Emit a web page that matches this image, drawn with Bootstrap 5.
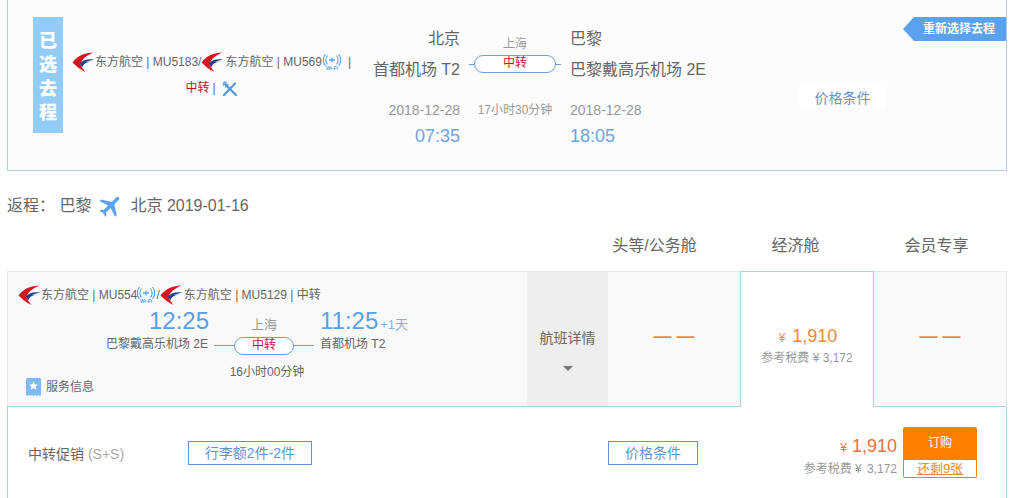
<!DOCTYPE html>
<html lang="zh">
<head>
  <meta charset="UTF-8">
  <title>选择航班</title>
  <link href="https://cdn.jsdelivr.net/npm/bootstrap@5.3.0/dist/css/bootstrap.min.css" rel="stylesheet">
  <style>
    body { font-family: "Liberation Sans", "Noto Sans CJK SC", sans-serif; color: #666; background: #fff; font-size: 12px; overflow: hidden; }
    .sheet { padding: 0 2px 0 7px; }
    .picked { height: 171px; background: #fcfcfc; border: 1px solid #a9cfe9; border-top: 0; position: relative; }
    .picked-tag { width: 30px; height: 116px; margin: 17px 0 0 25px; padding-top: 12px; background: #93cbfb; color: #fff; font-size: 18px; font-weight: 900; line-height: 24px; text-align: center; flex: none; }
    .picked-info { width: 297px; padding-top: 49px; line-height: 26px; flex: none; }
    .carrier-line { height: 26px; white-space: nowrap; }
    .carrier-logo { width: 22px; height: 22px; flex: none; }
    .wifi-ico { width: 18px; height: 18px; flex: none; }
    .gap-1px { margin-left: 1px; }
    .gap-2px { margin-left: 2px; }
    .gap-3px { margin-left: 3px; }
    .gap-6px { margin-left: 6px; }
    .gap-7px { margin-left: 7px; }
    .stop-red { color: #c8102e; }
    .picked-route { display: grid; grid-template-columns: 100px 110px 1fr; grid-template-rows: 30px 32px 11px 26px 25px; padding-top: 24px; width: 400px; flex: none; font-size: 16px; }
    .route-row1 { line-height: 30px; }
    .route-row2 { grid-row: 2; line-height: 32px; }
    .route-mid { grid-column: 2; grid-row: 1 / span 2; padding-top: 10px; font-size: 12px; color: #999; text-align: center; line-height: 18px; }
    .route-mid-city { height: 21px; padding-top: 1px; }
    .stop-link { display: flex; align-items: center; justify-content: center; }
    .stop-link::before, .stop-link::after { content: ""; height: 1px; background: #6d9fd8; }
    .stop-pill { border: 1px solid #6d9fd8; border-radius: 9px; height: 18px; line-height: 15px; font-size: 12px; background: #fff; text-align: center; }
    .picked-link::before, .picked-link::after { width: 5px; }
    .picked-link .stop-pill { width: 82px; }
    .date-txt { font-size: 14px; color: #999; line-height: 26px; }
    .span-txt { font-size: 12px; color: #999; line-height: 26px; text-align: center; }
    .time-sm { font-size: 18px; color: #6ea3e0; line-height: 26px; }
    .rebook { position: absolute; right: 0; top: 17px; width: 103px; height: 24px; line-height: 24px; padding-left: 20px; color: #fff; font-weight: 700; font-size: 12px; background: #5aa2f0; clip-path: polygon(0 50%, 11px 0, 100% 0, 100% 100%, 11px 100%); }
    .picked-cond { width: 87px; height: 22px; line-height: 22px; margin: 87px 0 0 39px; background: #fff; color: #5f93d3; font-size: 14px; text-align: center; flex: none; }
    .back-head { margin-top: 21px; font-size: 16px; line-height: 24px; }
    .plane-ico { width: 28px; height: 28px; margin: 0 5px 0 6px; fill: #5aa2f0; }
    .cabin-heads { padding-left: 577px; margin-top: 14px; font-size: 16px; line-height: 24px; }
    .cabin-heads > div { width: 141px; text-align: center; }
    .flight-row { margin-top: 13px; height: 136px; }
    .flight-cell { background: #f9f9f9; border-top: 1px solid #e8e8e8; border-bottom: 1px solid #a9d3ea; }
    .flight-main { width: 520px; border-left: 1px solid #e8e8e8; padding: 10px 0 0 10px; position: relative; }
    .flight-detail { width: 81px; background: #eee; border-top-color: #e8e8e8; font-size: 14px; padding-top: 54px; text-align: center; line-height: 24px; color: #666; }
    .detail-caret { width: 0; height: 0; border: 5px solid transparent; border-top: 5px solid #777; border-bottom: 0; margin: 16px auto 0; }
    .cabin-cell { display: flex; flex-direction: column; align-items: center; justify-content: center; }
    .cabin-none { width: 132px; color: #f98a2e; font-size: 18px; font-weight: 700; padding-bottom: 5px; }
    .cabin-on { width: 134px; background: #fff; border: 1px solid #a9d3ea; border-bottom: 0; padding-top: 12px; }
    .cabin-end { width: 133px; border-right: 1px solid #e8e8e8; }
    .price-big { font-size: 18px; color: #f0883a; line-height: 24px; padding-left: 2px; }
    .price-yen { font-size: 12px; }
    .cabin-on .price-yen { margin-right: 2px; }
    .cabin-on .price-tax { margin-top: -1px; }
    .price-tax { font-size: 12px; color: #999; line-height: 18px; }
    .tax-num { margin-left: 2px; }
    .back-route { display: grid; grid-template-columns: 190px 112px 1fr; grid-template-rows: 27px 22px 34px; margin-top: -2px; }
    .time-lg { font-size: 24px; line-height: 29px; color: #5b9fe6; }
    .time-dep { margin-right: -1px; }
    .time-plus { font-size: 13px; color: #7fb2e8; margin-left: 2px; }
    .back-mid { grid-column: 2; grid-row: 1 / span 2; font-size: 13px; color: #999; text-align: center; padding-top: 9px; }
    .back-link::before, .back-link::after { width: 20px; }
    .back-link { margin-top: 2px; }
    .back-link .stop-pill { width: 60px; }
    .back-city { grid-row: 2; line-height: 22px; }
    .back-span { grid-row: 3; grid-column: 2; line-height: 34px; padding-left: 6px; text-align: center; }
    .service-line { position: absolute; left: 18px; top: 105px; line-height: 20px; }
    .ticket-ico { width: 15px; height: 18px; margin-right: 5px; }
    .fare-panel { height: 110px; background: #fff; border-left: 1px solid #a9d3ea; border-right: 1px solid #a9d3ea; padding: 20px 29px 0 20px; }
    .fare-name { width: 160px; font-size: 14px; line-height: 54px; }
    .fare-code { color: #aaa; }
    .fare-tag { background: #fff; border: 1px solid #5f93d3; color: #5f93d3; border-radius: 0; font-size: 14px; line-height: 22px; height: 24px; padding: 0; margin-top: 14px; text-align: center; }
    .fare-bag { width: 124px; }
    .fare-cond { width: 90px; margin-left: 296px; }
    .fare-price { margin-right: 6px; padding-top: 7px; }
    .fare-amount { font-size: 18px; color: #ee6f3a; line-height: 24px; }
    .buy-box { width: 74px; }
    .buy-btn { display: block; width: 100%; height: 33px; line-height: 33px; padding: 0; border: 0; border-radius: 2px 2px 0 0; background: #ff8000; color: #fff; font-size: 12px; }
    .buy-left { height: 18px; line-height: 17px; border: 1px solid #ff8000; border-top: 0; border-radius: 0 0 2px 2px; text-align: center; color: #f0883a; font-size: 13px; text-decoration: underline; background: #fff; }
  </style>
</head>
<body>
  <svg width="0" height="0" class="d-none" aria-hidden="true">
    <symbol id="mu-logo" viewBox="0 0 22 22">
      <path d="M21.500 1.500C13 1.500 5 5 .5 11.500 4 15 8 18.500 13.500 21 11 18 9 15 8.500 13 10 8 15 4 21.500 1.500Z" fill="#d8141f"/>
      <path d="M22 8.500C15 7.500 10 9.500 7.800 12.800L10.500 16.500C11 13 15 10.800 20 10.600L14 10.800C17 9.800 19.500 9 22 8.500Z" fill="#1d3f8f"/>
    </symbol>
    <symbol id="wifi-mark" viewBox="0 0 18 18">
      <g fill="none" stroke="#5aa2f0" stroke-width="1.100">
        <path d="M4.500 2.500C2.300 5 2.300 9 4.500 11.500M2.500 1C-.4 4.500-.4 9.500 2.500 13M13.500 2.500C15.700 5 15.700 9 13.500 11.500M15.500 1C18.400 4.500 18.400 9.500 15.500 13"/>
        <path d="M6 7h6M9 4.500v5" stroke-width="1.300"/>
      </g>
      <text x="9" y="17" text-anchor="middle" font-size="5" font-weight="700" fill="#5aa2f0">Wi-Fi</text>
    </symbol>
  </svg>

  <div class="sheet">
    <div class="picked d-flex">
      <div class="picked-tag">已<br>选<br>去<br>程</div>
      <div class="picked-info">
        <div class="carrier-line d-flex align-items-center justify-content-center">
          <svg class="carrier-logo"><use href="#mu-logo"/></svg><span class="gap-1px">东方航空 | MU5183/</span><svg class="carrier-logo"><use href="#mu-logo"/></svg><span class="gap-2px">东方航空 | MU569</span><svg class="wifi-ico gap-1px"><use href="#wifi-mark"/></svg><span class="gap-7px">|</span>
        </div>
        <div class="d-flex align-items-center justify-content-center">
          <span class="stop-red">中转</span><span class="gap-3px">|</span>
          <svg class="gap-6px" width="16" height="15" viewBox="0 0 16 15" fill="none" stroke="#4f9ad8" stroke-linecap="round"><path d="M2 14 13 2.500" stroke-width="2.200"/><path d="M14 14 4 4" stroke-width="2.200"/><path d="M1.500 4.500 4.500 1.500M1 2.500 3 .8M3.500 6 6 3.500" stroke-width="1.200"/></svg>
        </div>
      </div>
      <div class="picked-route">
        <div class="text-end route-row1">北京</div>
        <div class="text-end route-row2">首都机场 T2</div>
        <div class="route-mid">
          <div class="route-mid-city">上海</div>
          <div class="stop-link picked-link"><div class="stop-pill stop-red">中转</div></div>
        </div>
        <div class="route-row1">巴黎</div>
        <div class="route-row2" style="grid-column:3">巴黎戴高乐机场 2E</div>
        <div class="date-txt text-end" style="grid-row:4;grid-column:1">2018-12-28</div>
        <div class="span-txt" style="grid-row:4;grid-column:2">17小时30分钟</div>
        <div class="date-txt" style="grid-row:4;grid-column:3">2018-12-28</div>
        <div class="time-sm text-end" style="grid-row:5;grid-column:1">07:35</div>
        <div class="time-sm" style="grid-row:5;grid-column:3">18:05</div>
      </div>
      <div class="picked-cond">价格条件</div>
      <div class="rebook">重新选择去程</div>
    </div>

    <div class="back-head d-flex align-items-center">
      <span>返程：&nbsp;巴黎</span>
      <svg class="plane-ico" viewBox="0 0 24 24"><path transform="rotate(45 12 12)" d="M21 16v-2l-8-5V3.500c0-.83-.67-1.500-1.500-1.500S10 2.670 10 3.500V9l-8 5v2l8-2.500V19l-2 1.500V22l3.500-1 3.500 1v-1.500L13 19v-5.500l8 2.500z"/></svg>
      <span>北京 2019-01-16</span>
    </div>

    <div class="cabin-heads d-flex">
      <div>头等/公务舱</div>
      <div>经济舱</div>
      <div>会员专享</div>
    </div>

    <div class="flight-row d-flex">
      <div class="flight-cell flight-main">
        <div class="carrier-line d-flex align-items-center">
          <svg class="carrier-logo"><use href="#mu-logo"/></svg><span class="gap-1px">东方航空 | MU554</span><svg class="wifi-ico"><use href="#wifi-mark"/></svg><span class="gap-1px">/</span><svg class="carrier-logo"><use href="#mu-logo"/></svg><span class="gap-2px">东方航空 | MU5129 | 中转</span>
        </div>
        <div class="back-route">
          <div class="time-lg time-dep text-end">12:25</div>
          <div class="back-city text-end" style="grid-column:1">巴黎戴高乐机场 2E</div>
          <div class="back-mid">
            <div>上海</div>
            <div class="stop-link back-link"><div class="stop-pill stop-red">中转</div></div>
          </div>
          <div class="time-lg">11:25<span class="time-plus">+1天</span></div>
          <div class="back-city" style="grid-column:3">首都机场 T2</div>
          <div class="back-span">16小时00分钟</div>
        </div>
        <div class="service-line d-flex align-items-center">
          <svg class="ticket-ico" viewBox="0 0 15 18"><path d="M1.500 0h12A1.500 1.500 0 0 1 15 1.500V17l-1.500 1-1.500-1-1.500 1L9 17l-1.500 1L6 17l-1.500 1L3 17l-1.500 1L0 17V1.500A1.500 1.500 0 0 1 1.500 0Z" fill="#7db9f2"/><path d="m7.500 3.500 1.300 2.800 3 .4-2.200 2 .6 3-2.700-1.500-2.700 1.500.6-3-2.200-2 3-.4Z" fill="#fff"/></svg>
          <span>服务信息</span>
        </div>
      </div>
      <div class="flight-cell flight-detail">
        航班详情
        <div class="detail-caret"></div>
      </div>
      <div class="flight-cell cabin-cell cabin-none">— —</div>
      <div class="cabin-cell cabin-on">
        <div class="price-big"><span class="price-yen">¥</span> 1,910</div>
        <div class="price-tax">参考税费 ¥ 3,172</div>
      </div>
      <div class="flight-cell cabin-cell cabin-none cabin-end">— —</div>
    </div>

    <div class="fare-panel d-flex align-items-start">
      <div class="fare-name">中转促销 <span class="fare-code">(S+S)</span></div>
      <button class="btn fare-tag fare-bag">行李额2件-2件</button>
      <button class="btn fare-tag fare-cond">价格条件</button>
      <div class="fare-price ms-auto text-end">
        <div class="fare-amount"><span class="price-yen">¥</span> 1,910</div>
        <div class="price-tax">参考税费 ¥ <span class="tax-num">3,172</span></div>
      </div>
      <div class="buy-box">
        <button class="btn buy-btn">订购</button>
        <div class="buy-left">还剩9张</div>
      </div>
    </div>
  </div>
</body>
</html>
